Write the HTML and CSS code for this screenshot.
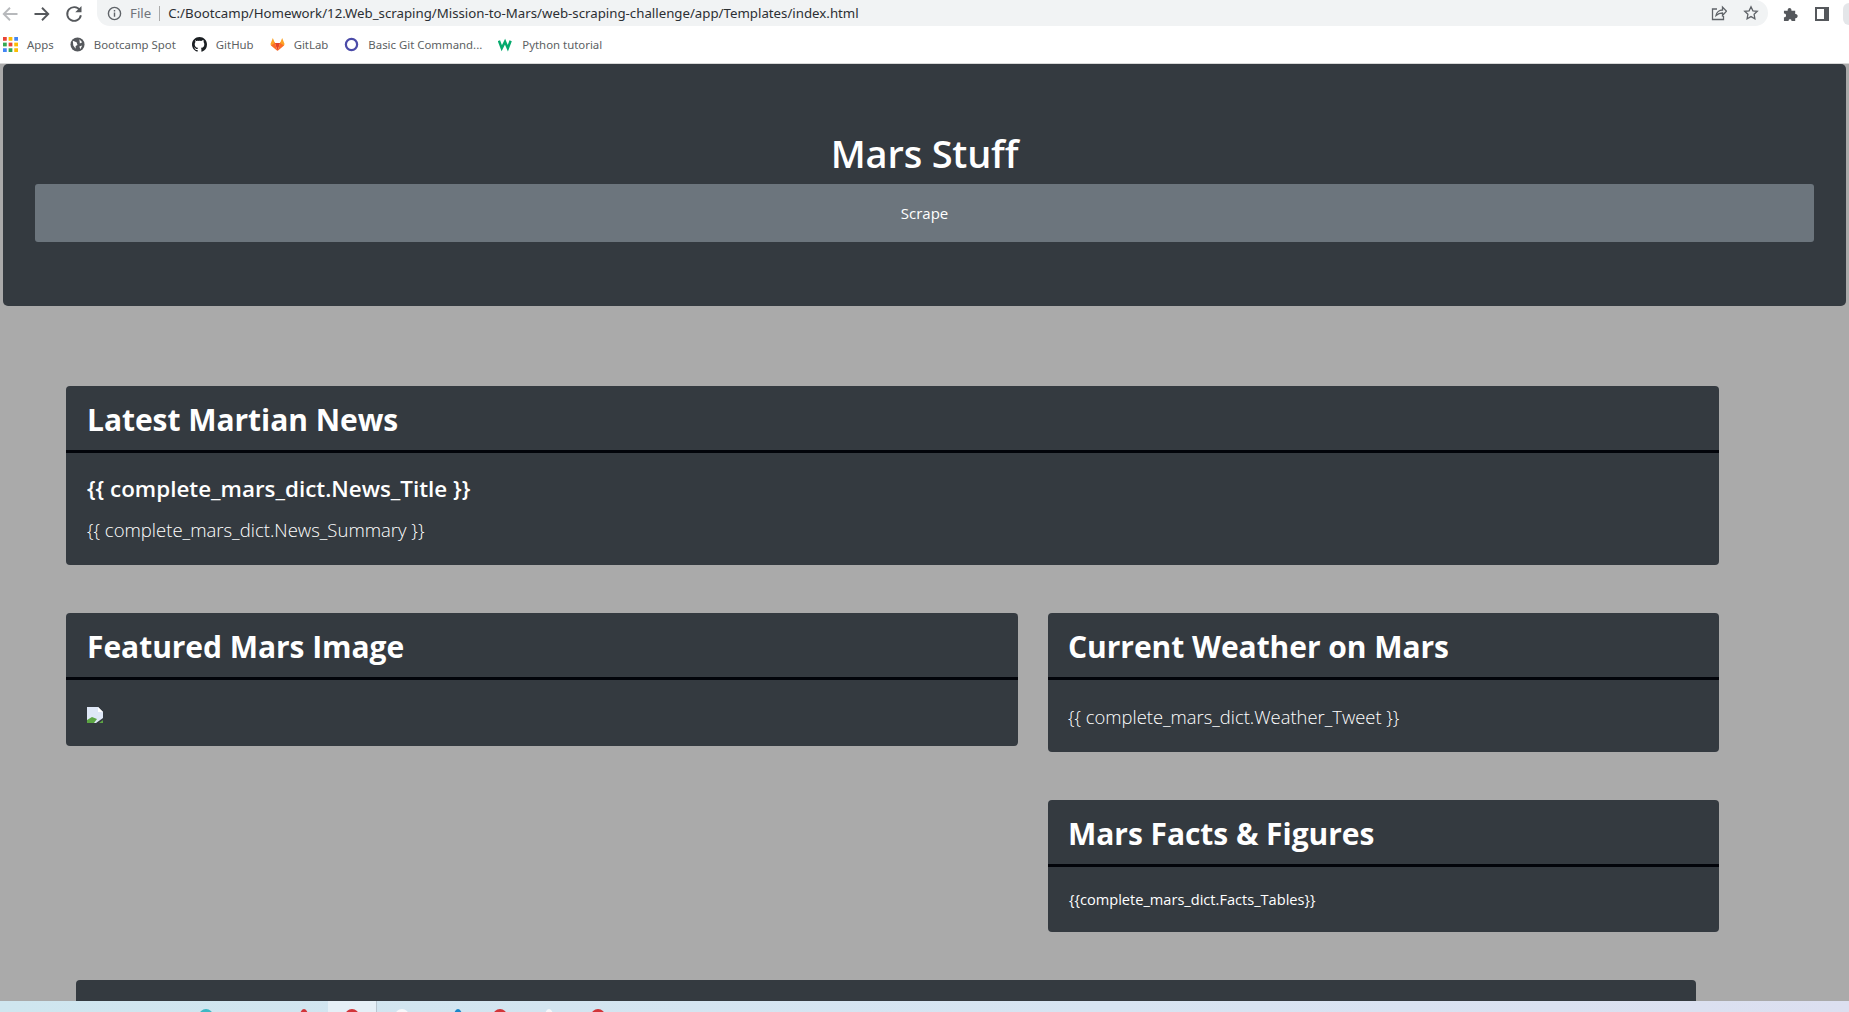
FILE: index.html
```html
<!DOCTYPE html>
<html lang="en">
<head>
  <meta charset="UTF-8" />
  <title>Mars Stuff</title>
  <link rel="stylesheet" href="styles.css">
</head>
<body>
  <div class="toolbar">
    <div class="nav-icons">
      <svg class="nav-icon back" viewBox="0 0 16 16"><path d="M14 8H3M8 3 3 8l5 5"/></svg>
      <svg class="nav-icon" viewBox="0 0 16 16"><path d="M2 8h11M8 3l5 5-5 5"/></svg>
      <svg class="nav-icon" viewBox="0 0 16 16"><path d="M12.700 5A5.500 5.500 0 1 0 13.500 9"/><path class="solid" d="M14 1.500V6.500H9z"/></svg>
    </div>
    <div class="url-pill">
      <svg class="info-icon" viewBox="0 0 16 16"><circle cx="8" cy="8" r="6.500"/><path d="M8 7v4.500M8 4.200v1.600"/></svg>
      <span class="url-file">File</span>
      <span class="url-path">C:/Bootcamp/Homework/12.Web_scraping/Mission-to-Mars/web-scraping-challenge/app/Templates/index.html</span>
      <span class="url-actions">
        <svg class="pill-icon" viewBox="0 0 16 16"><path d="M6 4H1.500v10.500h11V11M5 10.500C5.500 7 8.500 5 11.500 5V2l4 4.200-4 4.300V8C9 8 7 8.700 5 10.500z"/></svg>
        <svg class="pill-icon" viewBox="0 0 16 16"><path d="M8 1.800l1.900 4 4.400.5-3.200 3 .8 4.400L8 11.600l-3.900 2.100.8-4.400-3.200-3 4.400-.5z"/></svg>
      </span>
    </div>
    <svg class="ext-icon" viewBox="0 0 16 16"><path d="M1 5h4C4.500 1 9.500 1 9 5h4v3.500c3.500-.5 3.500 5 0 4.500v3H9c.5-2.500-3.500-2.500-3 0H1v-4c3 .5 3-4.500 0-4z"/></svg>
    <svg class="side-icon" viewBox="0 0 14 14"><path d="M0 0h14v14H0zM2 2v10h7V2z" fill-rule="evenodd"/></svg>
    <span class="avatar"></span>
  </div>

  <div class="bookmarks">
    <span class="bookmark">
      <svg class="bm-icon" viewBox="0 0 12 12">
        <rect x="0" y="0" width="3" height="3" fill="#ea4335"/><rect x="4.500" y="0" width="3" height="3" fill="#fbbc05"/><rect x="9" y="0" width="3" height="3" fill="#4285f4"/>
        <rect x="0" y="4.500" width="3" height="3" fill="#34a853"/><rect x="4.500" y="4.500" width="3" height="3" fill="#ea4335"/><rect x="9" y="4.500" width="3" height="3" fill="#fbbc05"/>
        <rect x="0" y="9" width="3" height="3" fill="#4285f4"/><rect x="4.500" y="9" width="3" height="3" fill="#34a853"/><rect x="9" y="9" width="3" height="3" fill="#fbbc05"/>
      </svg>
      Apps
    </span>
    <span class="bookmark">
      <svg class="bm-icon" viewBox="0 0 16 16"><circle cx="8" cy="8" r="7.500" fill="#55585c"/><path d="M3 4l4 1.500 1 3-2 1v3L3.500 9zM10 2.500l3 3-2.500 1.500zM10 10l3-1-2 4z" fill="#fff"/></svg>
      Bootcamp Spot
    </span>
    <span class="bookmark">
      <svg class="bm-icon" viewBox="0 0 16 16"><path fill="#1b1f23" d="M8 0C3.580 0 0 3.580 0 8c0 3.540 2.290 6.530 5.470 7.590.4.070.55-.17.55-.38v-1.340c-2.230.48-2.700-1.070-2.700-1.070-.36-.93-.890-1.170-.890-1.170-.73-.5.050-.490.050-.490.800.060 1.230.830 1.230.830.720 1.220 1.870.870 2.330.660.070-.520.280-.870.510-1.070-1.780-.200-3.640-.890-3.640-3.950 0-.870.310-1.590.820-2.150-.080-.200-.360-1.020.080-2.120 0 0 .670-.210 2.200.820a7.600 7.600 0 0 1 4 0c1.530-1.040 2.200-.820 2.200-.820.440 1.100.160 1.920.080 2.120.510.560.820 1.270.820 2.150 0 3.070-1.870 3.750-3.650 3.950.290.250.540.730.540 1.480v2.200c0 .210.150.460.550.380A8 8 0 0 0 16 8c0-4.420-3.580-8-8-8z"/></svg>
      GitHub
    </span>
    <span class="bookmark">
      <svg class="bm-icon" viewBox="0 0 16 16"><path fill="#e24329" d="M8 15 5.200 6.500h5.600z"/><path fill="#fc6d26" d="M8 15 1 9l1.200-3.500h3zM8 15l7-6-1.200-3.500h-3z"/><path fill="#fca326" d="M1 9 .5 7.500 3 1l2.200 5.500zM15 9l.5-1.500L13 1l-2.200 5.500z"/></svg>
      GitLab
    </span>
    <span class="bookmark">
      <svg class="bm-icon" viewBox="0 0 16 16"><circle cx="8" cy="8" r="6" fill="none" stroke="#4b4ba8" stroke-width="2.400"/></svg>
      Basic Git Command...
    </span>
    <span class="bookmark">
      <svg class="bm-icon" viewBox="0 0 16 16"><path fill="none" stroke="#04aa6d" stroke-width="2.600" d="M1 4l3 8 3.500-7 3 7 3-8"/></svg>
      Python tutorial
    </span>
  </div>

  <div class="page">
    <header class="jumbotron">
      <h1>Mars Stuff</h1>
      <a class="scrape-btn">Scrape</a>
    </header>

    <main class="content">
      <section class="card news-card">
        <h2 class="card-head">Latest Martian News</h2>
        <div class="news-body">
          <h3>{{ complete_mars_dict.News_Title }}</h3>
          <p>{{ complete_mars_dict.News_Summary }}</p>
        </div>
      </section>

      <div class="columns">
        <section class="card">
          <h2 class="card-head">Featured Mars Image</h2>
          <div class="image-body">
            <svg class="broken-img" viewBox="0 0 16 16">
              <path fill="#dfe8f7" d="M0 0h11l5 5v6L9 16H0z"/>
              <path fill="#fff" d="M11 0l5 5h-5z"/>
              <path fill="#5da544" d="M0 16v-3l5-3 5 2-3 4zM12 16l4-3v3z"/>
            </svg>
          </div>
        </section>

        <div class="side-column">
          <section class="card">
            <h2 class="card-head">Current Weather on Mars</h2>
            <p class="weather-body">{{ complete_mars_dict.Weather_Tweet }}</p>
          </section>
          <section class="card">
            <h2 class="card-head">Mars Facts &amp; Figures</h2>
            <p class="facts-body">{{complete_mars_dict.Facts_Tables}}</p>
          </section>
        </div>
      </div>

      <section class="card hemispheres">
        <h2 class="card-head">Mars Hemispheres</h2>
      </section>
    </main>
  </div>

  <footer class="taskbar">
    <span class="task-slot"><i class="task-dot teal"></i></span>
    <span class="task-slot"></span>
    <span class="task-slot"><i class="task-dot red narrow"></i></span>
    <span class="task-slot active"><i class="task-dot red"></i></span>
    <span class="task-slot"><i class="task-dot white"></i></span>
    <span class="task-slot"><i class="task-dot blue narrow"></i></span>
    <span class="task-slot"><i class="task-dot red"></i></span>
    <span class="task-slot"><i class="task-dot white narrow"></i></span>
    <span class="task-slot"><i class="task-dot red"></i></span>
  </footer>
</body>
</html>
```

FILE: styles.css
```css
* {
  box-sizing: border-box;
}
html, body {
  height: 100%;
}
body {
  margin: 0;
  display: flex;
  flex-direction: column;
  overflow: hidden;
  background: #aaaaaa;
  font-family: "Open Sans", "Noto Sans", sans-serif;
  color: #fff;
}

/* browser chrome */
.toolbar {
  flex: none;
  height: 27px;
  display: flex;
  align-items: center;
  background: #fff;
  color: #45494e;
}
.nav-icons {
  flex: none;
  width: 97px;
  display: flex;
  gap: 12px;
}
.nav-icon {
  width: 20px;
  height: 20px;
  fill: none;
  stroke: #55585c;
  stroke-width: 1.5;
}
.nav-icon.back {
  stroke: #b7b9bc;
}
.nav-icon .solid {
  fill: #55585c;
  stroke: none;
}
.url-pill {
  flex: none;
  width: 1671px;
  height: 26px;
  padding: 0 9px 0 10px;
  margin-top: -1px;
  display: flex;
  align-items: center;
  background: #f1f3f4;
  border-radius: 0 13px 13px 13px;
  font-family: "Noto Sans", sans-serif;
  font-size: 13.250px;
  white-space: nowrap;
}
.info-icon {
  flex: none;
  width: 15px;
  height: 15px;
  fill: none;
  stroke: #5f6368;
  stroke-width: 1.500;
}
.url-file {
  margin-left: 8px;
  padding-right: 8px;
  border-right: 1px solid #aaa;
  color: #70747a;
  line-height: 15px;
}
.url-path {
  margin-left: 8px;
  color: #2c2f33;
}
.url-actions {
  margin-left: auto;
  display: flex;
  gap: 16px;
}
.pill-icon {
  width: 16px;
  height: 16px;
  fill: none;
  stroke: #5f6368;
  stroke-width: 1.300;
}
.ext-icon {
  flex: none;
  width: 15px;
  height: 15px;
  margin-left: 15px;
  fill: #55585c;
}
.side-icon {
  flex: none;
  width: 14px;
  height: 14px;
  margin-left: 17px;
  fill: #55585c;
}
.avatar {
  flex: none;
  width: 6px;
  height: 22px;
  margin-left: 14px;
  background: #e4e6e9;
  border-radius: 6px 0 0 6px;
}
.bookmarks {
  flex: none;
  height: 37px;
  padding-left: 3px;
  padding-bottom: 2px;
  display: flex;
  align-items: center;
  gap: 16px;
  background: #fff;
  border-bottom: 1px solid #d8d8d8;
  color: #5c5f63;
  font-family: "Noto Sans", sans-serif;
  font-size: 11.400px;
}
.bookmark {
  display: flex;
  align-items: center;
  gap: 9px;
  white-space: nowrap;
}
.bm-icon {
  width: 15px;
  height: 15px;
}

/* page */
.page {
  flex: 1;
  min-height: 0;
  overflow: hidden;
}
.jumbotron {
  height: 242px;
  margin: 0 3px;
  padding: 63px 32px 0;
  background: #343a40;
  border-radius: 5px;
  text-align: center;
}
h1 {
  margin: 0;
  height: 57px;
  font-size: 38px;
  font-weight: 600;
  letter-spacing: -0.2px;
  line-height: 52px;
}
.scrape-btn {
  display: block;
  height: 58px;
  background: #6c757d;
  border-radius: 3px;
  font-size: 15px;
  line-height: 58px;
}
.content {
  width: 1653px;
  margin: 80px 0 0 66px;
}
.card {
  background: #343a40;
  border-radius: 4px;
}
.card-head {
  margin: 0;
  height: 67px;
  padding-left: 21px;
  border-bottom: 3px solid #02040a;
  font-size: 30px;
  font-weight: 700;
  letter-spacing: -0.05px;
  line-height: 68px;
}
.news-card {
  height: 179px;
}
.news-body {
  padding: 18px 21px 0;
}
.news-body h3 {
  margin: 0;
  font-size: 22.400px;
  font-weight: 600;
  line-height: 36px;
}
.news-body p {
  margin: 8px 0 0;
  font-size: 18.500px;
  font-weight: 300;
  line-height: 30px;
}
.columns {
  margin-top: 48px;
  display: grid;
  grid-template-columns: 952px 671px;
  gap: 30px;
  align-items: start;
}
.image-body {
  height: 66px;
  padding: 27px 21px 0;
}
.broken-img {
  display: block;
  width: 16px;
  height: 16px;
}
.side-column {
  display: flex;
  flex-direction: column;
  gap: 48px;
}
.side-column .card-head {
  padding-left: 20px;
}
.weather-body {
  margin: 0;
  height: 72px;
  padding: 22px 20px 0;
  font-size: 18.400px;
  font-weight: 300;
  line-height: 30px;
}
.facts-body {
  margin: 0;
  height: 65px;
  padding: 20px 21px 0;
  font-size: 14.600px;
  line-height: 24px;
}
.hemispheres {
  width: 1620px;
  margin: 48px 0 0 10px;
  text-align: center;
}
.hemispheres .card-head {
  padding: 0;
}

/* windows taskbar, only the top edge is in view */
.taskbar {
  flex: none;
  height: 11px;
  padding-left: 181px;
  display: flex;
  overflow: hidden;
  background: linear-gradient(90deg, #cfe6ef, #d7e4f2 60%, #dcdff0);
}
.task-slot {
  flex: none;
  width: 49px;
  display: flex;
  justify-content: center;
}
.task-slot.active {
  background: #e6f0f7;
  border-right: 1px solid #b9c6d0;
}
.task-dot {
  flex: none;
  width: 14px;
  height: 14px;
  margin-top: 8px;
  border-radius: 50%;
  background: #d13438;
}
.task-dot.teal {
  background: #3db8c4;
}
.task-dot.white {
  background: #f6f8fa;
}
.task-dot.blue {
  margin-left: 14px;
  background: #1a86c8;
}
.task-dot.narrow {
  width: 8px;
}
```
